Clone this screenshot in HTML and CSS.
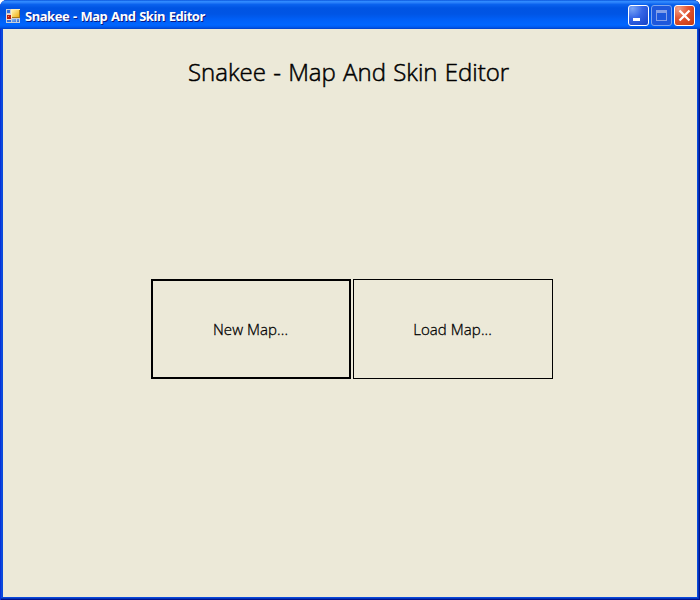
FILE: index.html
```html
<!DOCTYPE html>
<html lang="en">
<head>
<meta charset="utf-8">
<title>Snakee - Map And Skin Editor</title>
<link rel="stylesheet" href="styles.css">
</head>
<body>
<div class="window">
  <header class="titlebar">
    <svg class="app-icon" width="16" height="16" viewBox="0 0 16 16" shape-rendering="crispEdges">
      <defs>
        <linearGradient id="gold" x1="0" y1="0" x2="1" y2="1"><stop offset="0" stop-color="#fff3b0"/><stop offset="1" stop-color="#f0b010"/></linearGradient>
        <linearGradient id="sky" x1="0" y1="0" x2="1" y2="1"><stop offset="0" stop-color="#8db8f5"/><stop offset="1" stop-color="#2f68d2"/></linearGradient>
      </defs>
      <path d="M0 0h14v14H0z" fill="#c9cfd8"/>
      <path d="M1 1h3v3H1zM1 11h4v2H1z" fill="#2f6ee0"/>
      <path d="M6 10h4v3H6zM11 10h2v3h-2z" fill="url(#sky)"/>
      <path d="M0 5h5v6H0z" fill="#f0d8d0"/>
      <path d="M1 6h4v4H1z" fill="#b51d12"/>
      <path d="M2 7h1v1H2z" fill="#f08058"/>
      <path d="M5 0h9v9H5z" fill="#fff0b8"/>
      <path d="M6 1h7v7H6z" fill="url(#gold)"/>
      <path d="M13 1h1v8H6V8h7z" fill="#a87918"/>
    </svg>
    <span class="caption">Snakee - Map And Skin Editor</span>
    <div class="controls">
      <svg width="21" height="21" viewBox="0 0 21 21">
        <defs><radialGradient id="blue" cx=".2" cy=".15" r="1.1"><stop offset="0" stop-color="#7aa5f5"/><stop offset=".45" stop-color="#3565e6"/><stop offset="1" stop-color="#1743c8"/></radialGradient></defs>
        <rect x=".5" y=".5" width="20" height="20" rx="2.5" fill="url(#blue)" stroke="#fff"/>
        <path d="M5 13h7v3H5z" fill="#fff"/>
      </svg>
      <svg width="21" height="21" viewBox="0 0 21 21">
        <rect x=".5" y=".5" width="20" height="20" rx="2.5" fill="#1e58dc" stroke="#7da5ee"/>
        <path d="M5 5h11v11H5zM6 8v7h9V8z" fill="#85a0e8" fill-rule="evenodd"/>
      </svg>
      <svg width="21" height="21" viewBox="0 0 21 21">
        <defs><radialGradient id="red" cx=".2" cy=".15" r="1.1"><stop offset="0" stop-color="#f0a088"/><stop offset=".45" stop-color="#e25432"/><stop offset="1" stop-color="#c33a10"/></radialGradient></defs>
        <rect x=".5" y=".5" width="20" height="20" rx="2.5" fill="url(#red)" stroke="#fff"/>
        <path d="M5.5 5.5l10 10M15.5 5.5l-10 10" stroke="#fff" stroke-width="2.3"/>
      </svg>
    </div>
  </header>
  <main class="client">
    <h1 class="heading">Snakee - Map And Skin Editor</h1>
    <div class="actions">
      <button class="action action-default">New Map...</button>
      <button class="action">Load Map...</button>
    </div>
  </main>
</div>
</body>
</html>
```
FILE: styles.css
```css
* { box-sizing: border-box; }
body { margin: 0; background: #fff; }
.window {
  width: 700px;
  height: 600px;
  display: flex;
  flex-direction: column;
  padding: 0 3px 3px;
  border-radius: 7px 7px 0 0;
  background: #0a49dc;
  box-shadow: inset 1px 0 #0831d9, inset -1px 0 #00138c, inset 0 -1px #00138c, inset -2px -2px #0434b8;
  overflow: hidden;
}
.titlebar {
  height: 29px;
  flex: none;
  margin: 0 -3px;
  padding: 2px 5px 0 6px;
  display: flex;
  align-items: center;
  background: linear-gradient(#0a55dc 0, #2f8aff 1.5px, #2a80fa 2.5px, #0a62ee 4.5px, #0054e3 8px, #0055e5 14px, #0060f8 20px, #0066ff 25px, #005bf0 27px, #0040c8 29px);
}
.app-icon { position: relative; top: 1px; }
.caption {
  margin-left: 3px;
  color: #fff;
  font: bold 13px/20px "Noto Sans", sans-serif;
  white-space: nowrap;
  text-shadow: 1px 1px #0a1883;
  letter-spacing: -0.45px;
  word-spacing: 0.8px;
}
.controls { margin-left: auto; display: flex; gap: 2px; }
.controls svg { display: block; }
.client {
  flex: 1;
  display: flex;
  flex-direction: column;
  background: #ece9d8;
  color: #000;
  font-family: "Open Sans", "Noto Sans", sans-serif;
}
.heading {
  margin: 26px 0 0 185px;
  font-size: 24px;
  line-height: 34px;
  font-weight: 300;
  word-spacing: 1px;
  -webkit-text-stroke: 0.5px #000;
  white-space: nowrap;
}
.actions { display: flex; gap: 2px; margin: 190px 0 0 148px; }
.action {
  width: 200px;
  height: 100px;
  padding: 0 1px 1px 0;
  border: 1px solid #000;
  border-radius: 0;
  background: #ece9d8;
  color: #000;
  font: 300 15px "Open Sans", "Noto Sans", sans-serif;
  letter-spacing: 0.08px;
  -webkit-text-stroke: 0.3px #000;
}
.action-default { border-width: 2px; }
```
